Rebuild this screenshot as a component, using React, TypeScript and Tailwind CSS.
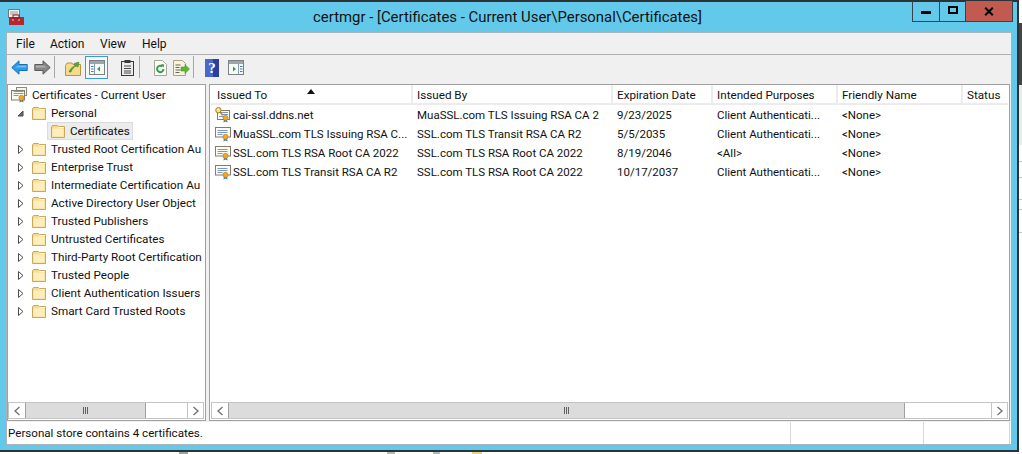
import React from "react";

function CertIcon({ gold = false, stack = false }: { gold?: boolean; stack?: boolean }) {
  return (
    <svg width="16" height="16" viewBox="0 0 16 16" className="shrink-0">
      {stack && <rect x="5.5" y="0.5" width="10" height="8" fill="#f8f6ea" stroke="#8f8a78" />}
      <rect x={gold ? 2.5 : 0.5} y={gold ? 3.5 : stack ? 3.5 : 1.5} width={gold ? 12 : stack ? 13 : 15} height={gold ? 9 : 9.5} fill="#fdfcf4" stroke="#857d6b" />
      <path d={gold ? "M6 5.5h7M7 7.5h6M4 9.5h5" : "M2.5 4.5h10M2.5 6.5h10M2.5 8.5h5"} stroke="#7d97c4" strokeWidth="1" />
      <path d="M9 12.5l-.6 3 2.1-1.1 2.1 1.1-.6-3z" fill="#3f78c8" />
      <circle cx="10.5" cy="10.8" r="2.6" fill="#f2a91c" stroke="#bb7810" strokeWidth="0.6" />
      {gold && (
        <g>
          <circle cx="3.4" cy="3.2" r="2.7" fill="#f8e08c" stroke="#a57c1e" />
          <circle cx="2.8" cy="2.4" r="0.7" fill="#fff" />
          <path d="M5.2 5.2l2.4 3.2" stroke="#a57c1e" strokeWidth="1.4" />
        </g>
      )}
    </svg>
  );
}

function Folder() {
  return (
    <svg width="14" height="13" viewBox="0 0 14 13" className="shrink-0">
      <path d="M.5 2v10.5h13V1.5H7.5L6.5.5H1.5z" fill="#f6dc92" stroke="#c9a85c" />
      <path d="M1.5 3.5h11v8h-11z" fill="#fdeebb" />
      <path d="M7.5 2.5h5" stroke="#fff" />
    </svg>
  );
}

function Expander({ open = false }: { open?: boolean }) {
  return (
    <svg width="9" height="9" viewBox="0 0 9 9" className="shrink-0">
      {open ? <path d="M7 2v5H2z" fill="#6b6b6b" stroke="#4a4a4a" /> : <path d="M2.5 .5l4.5 4-4.5 4z" fill="#fff" stroke="#4d4d4d" />}
    </svg>
  );
}

function Chevron({ right = false }: { right?: boolean }) {
  return (
    <svg width="8" height="10" viewBox="0 0 8 10">
      <path d={right ? "M1.5 1l4.5 4-4.5 4" : "M6.5 1L2 5l4.5 4"} fill="none" stroke="#707070" strokeWidth="1.3" />
    </svg>
  );
}

function ScrollBar({ thumb, margin }: { thumb: string; margin: string }) {
  return (
    <div className={`${margin} h-[17px] mb-[1px] flex border border-[#c4c4c4] bg-white shrink-0`}>
      <div className="w-[16px] flex items-center justify-center shrink-0">
        <Chevron />
      </div>
      <div className={`${thumb} flex items-center justify-center bg-[#dcdcdc] border-x border-[#a0a0a0] shrink-0`}>
        <span className="w-px h-[7px] bg-[#606060]" />
        <span className="w-px h-[7px] bg-[#606060] ml-px" />
        <span className="w-px h-[7px] bg-[#606060] ml-px" />
      </div>
      <div className="grow" />
      <div className="w-[16px] flex items-center justify-center border-l border-[#c4c4c4] shrink-0">
        <Chevron right />
      </div>
    </div>
  );
}

const treeItems = [
  "Trusted Root Certification Au",
  "Enterprise Trust",
  "Intermediate Certification Au",
  "Active Directory User Object",
  "Trusted Publishers",
  "Untrusted Certificates",
  "Third-Party Root Certification",
  "Trusted People",
  "Client Authentication Issuers",
  "Smart Card Trusted Roots",
];

const columns = [
  { name: "Issued To", w: "w-[200px] pl-[6px]" },
  { name: "Issued By", w: "w-[200px] pl-[4px] border-l-2" },
  { name: "Expiration Date", w: "w-[100px] pl-[4px] border-l-2" },
  { name: "Intended Purposes", w: "w-[125px] pl-[4px] border-l-2" },
  { name: "Friendly Name", w: "w-[125px] pl-[4px] border-l-2" },
  { name: "Status", w: "w-[47px] pl-[4px] border-l-2" },
];

const rows = [
  ["cai-ssl.ddns.net", "MuaSSL.com TLS Issuing RSA CA 2", "9/23/2025", "Client Authenticati...", "<None>"],
  ["MuaSSL.com TLS Issuing RSA C...", "SSL.com TLS Transit RSA CA R2", "5/5/2035", "Client Authenticati...", "<None>"],
  ["SSL.com TLS RSA Root CA 2022", "SSL.com TLS RSA Root CA 2022", "8/19/2046", "<All>", "<None>"],
  ["SSL.com TLS Transit RSA CA R2", "SSL.com TLS RSA Root CA 2022", "10/17/2037", "Client Authenticati...", "<None>"],
];

function ToolBtn({ children, w = "w-[24px]", active = false }: { children: React.ReactNode; w?: string; active?: boolean }) {
  return (
    <div className={`${w} h-[23px] flex items-center justify-center shrink-0 ${active ? "border border-[#3b9bd8] bg-[#f2f8fc]" : ""}`}>
      {children}
    </div>
  );
}

function Sep({ right }: { right: string }) {
  return <div className={`w-px h-[22px] bg-[#a8a8a8] shrink-0 ${right}`} />;
}

function Arrow({ right = false, color, stroke }: { right?: boolean; color: string; stroke: string }) {
  return (
    <svg width="17" height="15" viewBox="0 0 17 15" className={right ? "-scale-x-100" : ""}>
      <path d="M.8 7.5L8 .8V4.5h8.2v6H8v3.7z" fill={color} stroke={stroke} strokeLinejoin="round" />
      <path d="M7.5 5.5h8v2H4z" fill="#fff" opacity="0.35" />
    </svg>
  );
}

function PaneIcon({ side }: { side: "left" | "right" }) {
  return (
    <svg width="16" height="15" viewBox="0 0 16 15">
      <rect x="0.5" y="0.5" width="15" height="14" fill="#f8fafa" stroke="#7a8288" />
      <rect x="1" y="1" width="14" height="3" fill="#9ea4aa" />
      <path d={side === "left" ? "M5.5 4v10" : "M10.5 4v10"} stroke="#8a98a8" />
      <path d={side === "left" ? "M2 6.5h2.5M2 9h2.5M2 11.5h2.5" : "M12 6.5h2.5M12 9h2.5M12 11.5h2.5"} stroke="#3f7fc0" />
      {side === "left" ? <path d="M11 6.5v5L8 9z" fill="#2f9e4f" /> : <path d="M5 6.5v5L8 9z" fill="#2f9e4f" />}
    </svg>
  );
}

export default function App() {
  return (
    <div className="w-[1022px] h-[454px] overflow-hidden bg-white flex flex-col font-['Roboto','Noto_Sans',sans-serif] text-[11.7px] leading-[18px] text-[#111]">
      <div className="flex h-[452px] shrink-0">
        <div className="w-[1019px] shrink-0 flex flex-col bg-[#63c9ea] border-t-2 border-r-2 border-b-2 border-[#2b3238] relative">
          <div className="h-[30px] shrink-0 flex items-center pl-[8px] relative">
            <svg width="16" height="16" viewBox="0 0 16 16" className="shrink-0 -mt-[1px]">
              <rect x="0.5" y="0.5" width="11" height="8" fill="#f2f2f2" stroke="#777" />
              <path d="M2 3h8M2 5h8" stroke="#999" />
              <rect x="1" y="8" width="15" height="8" fill="#b5272c" />
              <rect x="5" y="6" width="6" height="3" fill="none" stroke="#8a1a1e" />
              <path d="M4 11h2M10 11h2" stroke="#f2c1c1" />
            </svg>
            <div className="grow text-center text-[14.9px] text-[#111] pr-[26px] -mt-[1px]">certmgr - [Certificates - Current User\Personal\Certificates]</div>
            <div className="absolute left-[912px] top-[-1px] flex h-[21px] border-b border-x border-[#39424a]">
              <div className="w-[27px] flex items-center justify-center border-r border-[#39424a]">
                <span className="w-[10px] h-[3px] bg-black mt-[3px]" />
              </div>
              <div className="w-[26px] flex items-center justify-center border-r border-[#39424a]">
                <span className="w-[10px] h-[8px] border-2 border-black mb-[3px]" />
              </div>
              <div className="w-[46px] flex items-center justify-center bg-[#c25a50]">
                <svg width="10" height="9" viewBox="0 0 10 9">
                  <path d="M1.2 .8l7.6 7.4M8.8 .8L1.2 8.2" stroke="#000" strokeWidth="2" />
                </svg>
              </div>
            </div>
          </div>

          <div className="h-[413px] shrink-0 ml-[6px] mr-[5px] flex flex-col bg-[#f0f0f0] border border-[#a9b4ba]">
            <div className="h-[22px] shrink-0 flex items-center pl-[9px] border-b border-[#b0b0b0] text-[12px]">
              <span className="w-[34px]">File</span>
              <span className="w-[50px]">Action</span>
              <span className="w-[42px]">View</span>
              <span>Help</span>
            </div>
            <div className="h-[29px] shrink-0 flex items-start pt-[1px]">
              <ToolBtn><Arrow color="#2a9be8" stroke="#1770b4" /></ToolBtn>
              <ToolBtn w="w-[23px]"><Arrow right color="#858585" stroke="#5a5a5a" /></ToolBtn>
              <Sep right="mr-[6px]" />
              <ToolBtn>
                <svg width="16" height="16" viewBox="0 0 16 16">
                  <path d="M.5 5.5v10h15v-11H8L7 3H2z" fill="#f5d98c" stroke="#b8963f" />
                  <path d="M4 12c1-3 3-5 6-6l-1-2.5 5-1.5-1 5-2-1c-2 1-4 3-5 6z" fill="#57a932" stroke="#3c7f20" strokeWidth="0.5" />
                </svg>
              </ToolBtn>
              <ToolBtn w="w-[23px]" active><PaneIcon side="left" /></ToolBtn>
              <div className="w-[7px] shrink-0" />
              <ToolBtn>
                <svg width="13" height="16" viewBox="0 0 13 16">
                  <rect x="0.5" y="1.5" width="12" height="14" fill="#ececec" stroke="#3a3a3a" />
                  <rect x="3.5" y="0" width="6" height="3" fill="#3a3a3a" />
                  <path d="M3 6h7M3 8.5h7M3 11h7M3 13h7" stroke="#4a4a4a" />
                </svg>
              </ToolBtn>
              <Sep right="mr-[8px]" />
              <ToolBtn>
                <svg width="15" height="16" viewBox="0 0 15 16">
                  <path d="M1.5 .5h8l4 4v11h-12z" fill="#fbfaf4" stroke="#a5a59a" />
                  <path d="M10.5 9a3.2 3.2 0 1 1-1-2.4" fill="none" stroke="#2f9e4f" strokeWidth="2" />
                  <path d="M8 4l3.2.4-.5 3.2z" fill="#2f9e4f" />
                </svg>
              </ToolBtn>
              <ToolBtn w="w-[18px]">
                <svg width="17" height="16" viewBox="0 0 17 16">
                  <path d="M.5 .5h9l3 3v12H.5z" fill="#f8f3dc" stroke="#a8a288" />
                  <path d="M2.5 5h5M2.5 7.5h4M2.5 10h5M2.5 12.5h4" stroke="#666" />
                  <path d="M8 7h4V4.5L16.5 9 12 13.5V11H8z" fill="#62b534" stroke="#3f8a20" strokeWidth="0.5" />
                </svg>
              </ToolBtn>
              <div className="w-[3px] shrink-0" />
              <Sep right="mr-[6px]" />
              <ToolBtn>
                <svg width="14" height="18" viewBox="0 0 14 18">
                  <rect width="14" height="18" fill="#2a3f9e" />
                  <rect width="8" height="18" fill="#4a68cc" />
                  <text x="7" y="14" textAnchor="middle" fontSize="15" fontWeight="700" fill="#fff" fontFamily="Liberation Serif">?</text>
                </svg>
              </ToolBtn>
              <ToolBtn w="w-[23px]"><PaneIcon side="right" /></ToolBtn>
            </div>

            <div className="grow min-h-0 flex gap-[3px] pr-[1px]">
              <div className="w-[199px] shrink-0 flex flex-col bg-white border border-[#a0a0a0]">
                <div className="grow min-h-0 overflow-hidden pt-[1px] whitespace-nowrap">
                  <div className="h-[18px] flex items-center gap-[5px] pl-[3px]">
                    <CertIcon stack />
                    <span>Certificates - Current User</span>
                  </div>
                  <div className="h-[18px] flex items-center pl-[8px]">
                    <Expander open />
                    <div className="w-[7px] shrink-0" />
                    <Folder />
                    <span className="ml-[5px]">Personal</span>
                  </div>
                  <div className="h-[18px] flex items-center pl-[39px]">
                    <div className="h-[18px] flex items-center gap-[5px] bg-[#ececec] border border-[#dcdcdc] pr-[2px] pl-[3px]">
                      <Folder />
                      <span>Certificates</span>
                    </div>
                  </div>
                  {treeItems.map((t) => (
                    <div key={t} className="h-[18px] flex items-center pl-[8px]">
                      <Expander />
                      <div className="w-[7px] shrink-0" />
                      <Folder />
                      <span className="ml-[5px]">{t}</span>
                    </div>
                  ))}
                </div>
                <ScrollBar thumb="w-[121px]" margin="mr-[1px]" />
              </div>

              <div className="grow min-w-0 flex flex-col bg-white border border-[#a0a0a0]">
                <div className="grow min-h-0 overflow-hidden pl-[1px]">
                  <div className="h-[20px] flex relative">
                    <svg width="8" height="5" viewBox="0 0 8 5" className="absolute left-[96px] top-[4px]">
                      <path d="M0 5l4-5 4 5z" fill="#111" />
                    </svg>
                    {columns.map((c) => (
                      <div key={c.name} className={`${c.w} shrink-0 flex items-center pt-[2px] border-b-2 border-[#ececec] whitespace-nowrap`}>
                        {c.name}
                      </div>
                    ))}
                  </div>
                  {rows.map((r, i) => (
                    <div key={r[0]} className="h-[19px] flex items-center whitespace-nowrap text-[11.5px]">
                      <div className="w-[200px] shrink-0 flex items-center gap-[2px] pl-[4px]">
                        <CertIcon gold={i === 0} />
                        <span>{r[0]}</span>
                      </div>
                      <div className="w-[200px] shrink-0 pl-[6px]">{r[1]}</div>
                      <div className="w-[100px] shrink-0 pl-[6px]">{r[2]}</div>
                      <div className="w-[125px] shrink-0 pl-[6px]">{r[3]}</div>
                      <div className="w-[125px] shrink-0 pl-[6px]">{r[4]}</div>
                    </div>
                  ))}
                </div>
                <ScrollBar thumb="w-[677px]" margin="mx-[1px]" />
              </div>
            </div>

            <div className="h-[22px] shrink-0 flex items-center bg-white mt-[1px] pr-[1px]">
              <span className="grow pl-[1px] text-[11.6px]">Personal store contains 4 certificates.</span>
              <span className="w-[134px] h-full border-x border-[#d8d8d8]" />
              <span className="w-[86px] h-full border-r border-[#d8d8d8]" />
            </div>
          </div>
        </div>
        <div className="grow flex flex-col">
          <div className="h-[23px] bg-white" />
          <div className="h-[62px] bg-[#444444]" />
          <div className="h-[60px] bg-[#e6ebee]" />
          <div className="h-[17px] border-b border-[#c8c8c8]" />
          <div className="h-[16px] border-b border-[#c8c8c8]" />
          <div className="h-[22px] border-b border-[#c8c8c8]" />
          <div className="h-[10px] border-b border-[#c8c8c8]" />
          <div className="h-[23px] border-b border-[#c8c8c8]" />
        </div>
      </div>
      <div className="h-[2px] flex shrink-0">
        <div className="w-[179px]" />
        <div className="w-[9px] bg-[#9aa4b0]" />
        <div className="w-[199px]" />
        <div className="w-[8px] bg-[#b8b8b8]" />
        <div className="w-[38px]" />
        <div className="w-[7px] bg-[#a8bcc8]" />
        <div className="w-[32px]" />
        <div className="w-[10px] bg-[#f0d080]" />
      </div>
    </div>
  );
}
